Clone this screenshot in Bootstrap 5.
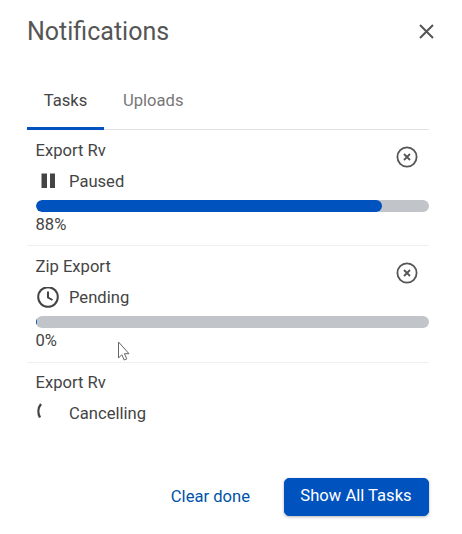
<!DOCTYPE html>
<html lang="en">
<head>
    <meta charset="UTF-8">
    <meta name="viewport" content="width=device-width, initial-scale=1.0">
    <title>Notifications</title>
    <link href="https://cdn.jsdelivr.net/npm/bootstrap@5.3.0/dist/css/bootstrap.min.css" rel="stylesheet">
    <style>
        html, body { height: 534px; overflow: hidden; }
        body { font-family: Roboto, "Liberation Sans", sans-serif; color: #444; background: #fff; font-size: 16.6px; line-height: 22px; }
        .panel { padding: 0 33px 0 27px; height: 534px; }
        .panel-head { height: 62px; padding-top: 14px; }
        .panel-title { font-size: 25px; line-height: 36px; font-weight: 400; color: #555; margin: 0; }
        .close-x { width: 17px; height: 17px; color: #555; margin: 9px -6px 0 0; }
        .tab-row { height: 68px; border-bottom: 1px solid #e2e0e2; padding-top: 28px; }
        .tab-item { height: 40px; line-height: 22px; text-align: center; color: #777; }
        .tab-item.is-active { width: 77px; color: #444; border-bottom: 3px solid #0052bf; }
        .tab-item.is-next { margin-left: 19px; }
        .task-row { padding: 0 0 0 8.5px; height: 116.3px; border-bottom: 1px solid #efefef; position: relative; }
        .task-row.is-last { border-bottom: 0; height: 90px; }
        .task-name { padding-top: 9.6px; height: 32px; }
        .task-status { height: 29px; padding-top: 8.7px; }
        .status-icon { width: 24px; height: 22px; margin-right: 9.5px; flex: none; }
        .track { height: 12px; border-radius: 6px; background: #c1c5c9; margin: 9px 0 0; overflow: hidden; }
        .track-fill { height: 100%; background: #0052bf; border-radius: 6px; }
        .task-pct { margin-top: 2px; }
        .row-cancel { position: absolute; top: 15.5px; right: 11px; width: 22px; height: 22px; color: #555; }
        .panel-foot { padding-top: 25px; }
        .link-clear { color: #0052a8; text-decoration: none; margin-right: 34px; }
        .btn-tasks { background: #0052bf; border-color: #0052bf; color: #fff; width: 145px; height: 38px; padding: 0 1px 0 0; font-size: 16.6px; border-radius: 5px; box-shadow: 0 1px 3px rgba(0,0,0,.3); }
        .pointer-mark { position: absolute; left: 117px; top: 341px; width: 15px; height: 20px; }
    </style>
</head>
<body>
    <div class="panel">
        <div class="panel-head d-flex justify-content-between align-items-start">
            <h1 class="panel-title">Notifications</h1>
            <svg class="close-x" viewBox="0 0 17 17" fill="none" stroke="currentColor" stroke-width="2"><path d="M2 2l13 13M15 2L2 15"/></svg>
        </div>

        <div class="tab-row d-flex">
            <div class="tab-item is-active">Tasks</div>
            <div class="tab-item is-next">Uploads</div>
        </div>

        <div class="task-row">
            <div class="task-name">Export Rv</div>
            <div class="task-status d-flex align-items-start">
                <svg class="status-icon" viewBox="0 0 24 22" fill="#444"><rect x="5.5" y="2.5" width="5.5" height="14.5"/><rect x="14" y="2.5" width="5" height="14.5"/></svg>
                <span>Paused</span>
            </div>
            <div class="track"><div class="track-fill" style="width: 88%"></div></div>
            <div class="task-pct">88%</div>
            <svg class="row-cancel" viewBox="0 0 22 22" fill="none" stroke="currentColor" stroke-width="1.8"><circle cx="11" cy="11" r="9.6"/><path d="M8 8l6 6M14 8l-6 6"/></svg>
        </div>

        <div class="task-row">
            <div class="task-name">Zip Export</div>
            <div class="task-status d-flex align-items-start">
                <svg class="status-icon" viewBox="0 0 24 22" fill="none" stroke="#444" stroke-width="2"><circle cx="12" cy="10" r="9.8"/><path d="M12 4.5V10.5l4.5 2.5"/></svg>
                <span>Pending</span>
            </div>
            <div class="track"><div class="track-fill" style="width: 0.5%"></div></div>
            <div class="task-pct">0%</div>
            <svg class="row-cancel" viewBox="0 0 22 22" fill="none" stroke="currentColor" stroke-width="1.8"><circle cx="11" cy="11" r="9.6"/><path d="M8 8l6 6M14 8l-6 6"/></svg>
        </div>

        <div class="task-row is-last">
            <div class="task-name">Export Rv</div>
            <div class="task-status d-flex align-items-start">
                <svg class="status-icon" viewBox="0 0 24 22" fill="none" stroke="#444" stroke-width="2.4"><path d="M5 1C1.8 5 1.8 10.5 4 14.5"/></svg>
                <span>Cancelling</span>
            </div>
        </div>

        <div class="panel-foot d-flex justify-content-end align-items-center">
            <a href="#" class="link-clear">Clear done</a>
            <button type="button" class="btn btn-primary btn-tasks">Show All Tasks</button>
        </div>
    </div>

    <svg class="pointer-mark" viewBox="0 0 15 20" fill="#fff" stroke="#666" stroke-width="1"><path d="M1.5 1v16l3.3-3.3 2.4 5.3 2.6-1.1-2.4-5.2h4.6z"/></svg>

    <script src="https://cdn.jsdelivr.net/npm/bootstrap@5.3.0/dist/js/bootstrap.bundle.min.js"></script>
</body>
</html>
